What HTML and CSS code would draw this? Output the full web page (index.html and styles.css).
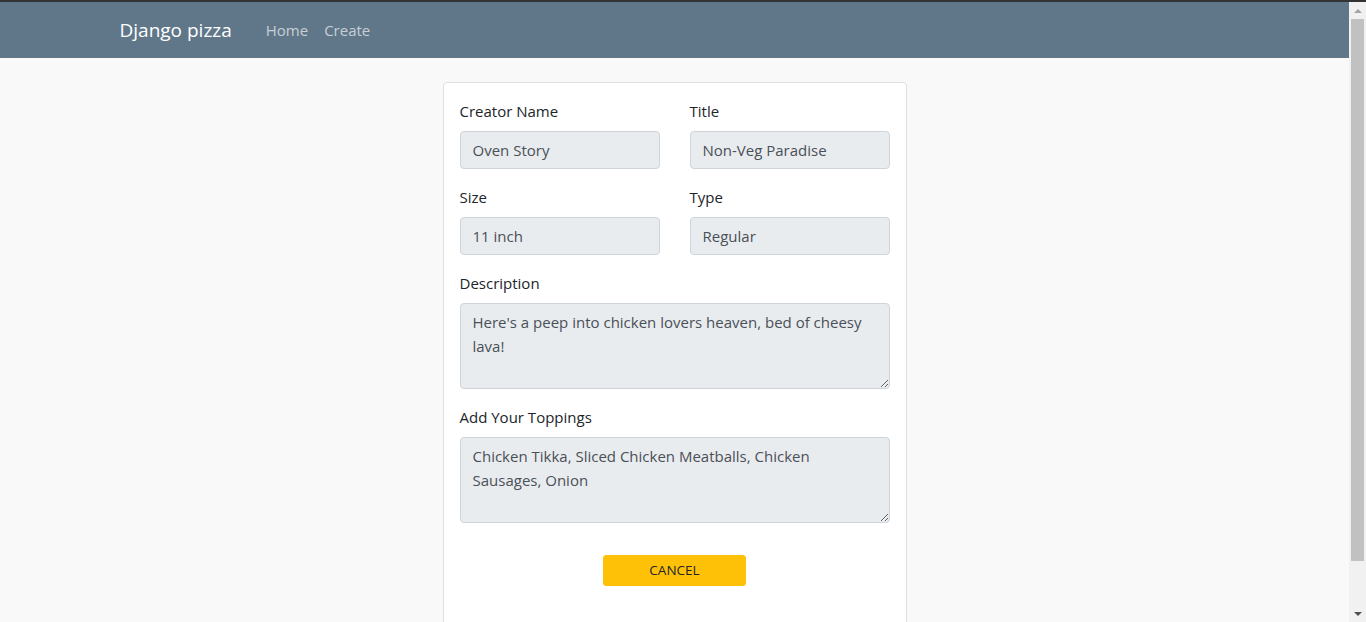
FILE: index.html
```html
<!DOCTYPE html>
<html lang="en">
<head>
<meta charset="utf-8">
<title>Django pizza</title>
<link rel="stylesheet" href="styles.css">
</head>
<body>
<div class="topline"></div>
<div class="viewport">
  <div class="page">
    <nav class="navbar">
      <div class="container nav-inner">
        <a class="brand" href="#">Django pizza</a>
        <div class="nav-links">
          <a class="nav-link" href="#">Home</a>
          <a class="nav-link" href="#">Create</a>
        </div>
      </div>
    </nav>
    <main class="card">
      <form class="card-body">
        <div class="row">
          <div class="form-group">
            <label>Creator Name</label>
            <input class="form-control" type="text" value="Oven Story" readonly>
          </div>
          <div class="form-group">
            <label>Title</label>
            <input class="form-control" type="text" value="Non-Veg Paradise" readonly>
          </div>
        </div>
        <div class="row">
          <div class="form-group">
            <label>Size</label>
            <input class="form-control" type="text" value="11 inch" readonly>
          </div>
          <div class="form-group">
            <label>Type</label>
            <input class="form-control" type="text" value="Regular" readonly>
          </div>
        </div>
        <div class="form-group">
          <label>Description</label>
          <textarea class="form-control area" rows="3" readonly>Here's a peep into chicken lovers heaven, bed of cheesy lava!</textarea>
        </div>
        <div class="form-group">
          <label>Add Your Toppings</label>
          <textarea class="form-control area" rows="3" readonly>Chicken Tikka, Sliced Chicken Meatballs, Chicken Sausages, Onion</textarea>
        </div>
        <div class="actions">
          <button type="button" class="btn-cancel">CANCEL</button>
        </div>
      </form>
    </main>
  </div>
  <div class="scrollbar" aria-hidden="true">
    <div class="arrow"><span class="tri-up"></span></div>
    <div class="thumb"></div>
    <div class="arrow arrow-down"><span class="tri-down"></span></div>
  </div>
</div>
</body>
</html>
```
FILE: styles.css
```css
* { box-sizing: border-box; }
html, body { margin: 0; }
body {
  background: #f9f9f9;
  font-family: "Open Sans", "Noto Sans", sans-serif;
  font-size: 15px;
  line-height: 24px;
  color: #212529;
  height: 622px;
  overflow: hidden;
}
.topline { height: 2px; background: #333; }
.viewport {
  display: flex;
  height: 620px;
}
.page {
  flex: 1;
  min-width: 0;
  overflow: hidden;
  padding-bottom: 24px;
}
.scrollbar {
  width: 17px;
  flex: none;
  background: #f1f1f1;
  display: flex;
  flex-direction: column;
  align-items: center;
}
.arrow {
  height: 17px;
  width: 17px;
  display: flex;
  align-items: center;
  justify-content: center;
}
.arrow-down { margin-top: auto; }
.tri-up {
  width: 0; height: 0;
  border-left: 4px solid transparent;
  border-right: 4px solid transparent;
  border-bottom: 4px solid #a3a3a3;
}
.tri-down {
  width: 0; height: 0;
  border-left: 4px solid transparent;
  border-right: 4px solid transparent;
  border-top: 4px solid #505050;
}
.thumb {
  width: 13px;
  height: 542px;
  background: #c1c1c1;
}
.navbar {
  background: #607789;
  height: 56px;
}
.container {
  max-width: 1140px;
  margin: 0 auto;
  padding: 0 15px;
}
.nav-inner {
  display: flex;
  align-items: center;
  height: 56px;
}
.brand {
  color: #fff;
  font-size: 19px;
  text-decoration: none;
  margin-right: 26px;
  line-height: 30px;
}
.nav-links { display: flex; }
.nav-link {
  color: rgba(255,255,255,0.66);
  text-decoration: none;
  padding: 8px 8px;
}
.card {
  width: 464px;
  margin: 24px auto 0;
  background: #fff;
  border: 1px solid #e0e0e0;
  border-radius: 4px;
}
.card-body { padding: 16px 16px 48px; }
.row {
  display: grid;
  grid-template-columns: 1fr 1fr;
  column-gap: 30px;
}
.form-group { margin-bottom: 16px; }
label {
  display: block;
  margin-bottom: 8px;
}
.form-control {
  display: block;
  width: 100%;
  height: 38px;
  padding: 6px 12px;
  font: inherit;
  color: #495057;
  background: #e9ecef;
  border: 1px solid #ced4da;
  border-radius: 4px;
  outline: none;
}
.area {
  height: 86px;
  resize: vertical;
}
.actions {
  text-align: center;
  padding-top: 16px;
}
.btn-cancel {
  font: inherit;
  font-size: 13.5px;
  line-height: 21px;
  color: #212529;
  background: #ffc107;
  border: 1px solid #ffc107;
  border-radius: 3px;
  width: 143px;
  padding: 4px 0;
  cursor: pointer;
}
```
